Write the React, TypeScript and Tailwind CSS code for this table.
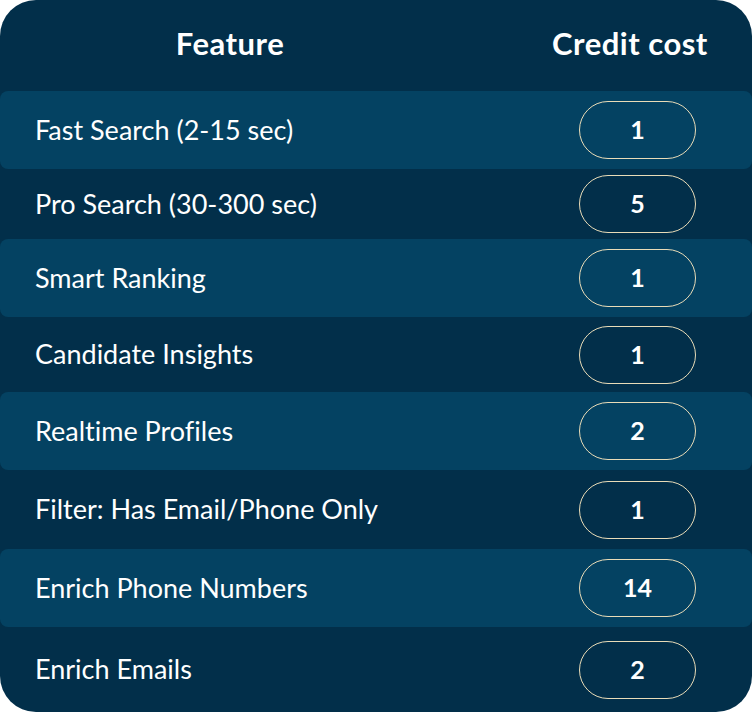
const rows = [
  { label: "Fast Search (2-15 sec)", cost: "1", h: "h-[78px]", stripe: true },
  { label: "Pro Search (30-300 sec)", cost: "5", h: "h-[70px]", stripe: false },
  { label: "Smart Ranking", cost: "1", h: "h-[78px]", stripe: true },
  { label: "Candidate Insights", cost: "1", h: "h-[75px]", stripe: false },
  { label: "Realtime Profiles", cost: "2", h: "h-[78px]", stripe: true },
  { label: "Filter: Has Email/Phone Only", cost: "1", h: "h-[79px]", stripe: false },
  { label: "Enrich Phone Numbers", cost: "14", h: "h-[78px]", stripe: true },
  { label: "Enrich Emails", cost: "2", h: "h-[85px]", stripe: false },
];

const App = () => {
  return (
    <div className="w-[752px] h-[712px] bg-white font-['Lato','Noto_Sans',sans-serif] [font-variant-ligatures:none]">
      <div className="w-full h-full rounded-[36px] bg-[#022f4a] overflow-hidden text-white">
        <div className="h-[91px] flex items-center pb-1">
          <div className="w-[460px] text-center text-[31px] font-bold tracking-[0.5px]">
            Feature
          </div>
          <div className="ml-auto w-[244px] text-center text-[31px] font-bold tracking-[0.5px]">
            Credit cost
          </div>
        </div>
        {rows.map((r) => (
          <div
            key={r.label}
            className={`${r.h} flex items-center pl-[35px] pr-[56px] rounded-lg ${
              r.stripe ? "bg-[#044262]" : ""
            }`}
          >
            <p className="text-[27px] flex-1">{r.label}</p>
            <div className="w-[117px] h-[58px] rounded-full border border-[#e9dcb8] flex items-center justify-center text-[25px] font-bold">
              {r.cost}
            </div>
          </div>
        ))}
      </div>
    </div>
  );
};

export default App;
